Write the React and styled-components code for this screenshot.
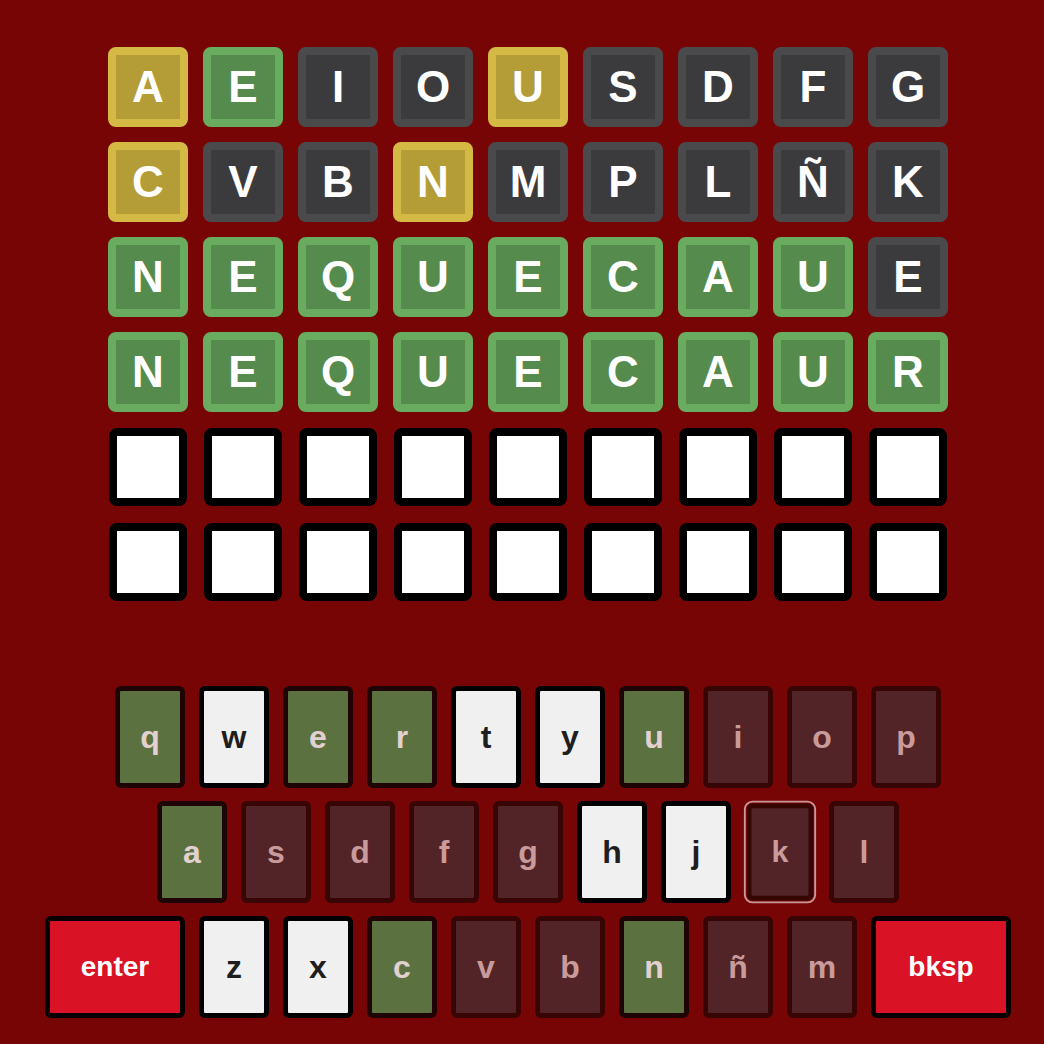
import React from "react";
import styled, { createGlobalStyle, css } from "styled-components";

const GlobalStyle = createGlobalStyle`
  html, body {
    margin: 0;
    padding: 0;
    background: #780505;
    overflow: hidden;
  }
  * {
    box-sizing: border-box;
  }
`;

const tileColors = {
  y: { border: "#d4ba45", fill: "#b49d37" },
  g: { border: "#69ab5f", fill: "#558b4c" },
  x: { border: "#4a4a4c", fill: "#3b3b3d" },
};

const keyColors = {
  g: { bg: "#5b7140", border: "#1e0404", color: "#e3d1d1" },
  w: { bg: "#f0f0f0", border: "#000000", color: "#1e1e1e" },
  d: { bg: "#522428", border: "#380505", color: "#c99b9b" },
  r: { bg: "#d91226", border: "#080000", color: "#ffffff" },
};

const Page = styled.div`
  min-height: 1044px;
  padding: 47px 0 0 12px;
  font-family: "Liberation Sans", Arial, sans-serif;
`;

const Board = styled.div`
  display: grid;
  grid-template-columns: repeat(9, 80px);
  grid-auto-rows: 80px;
  gap: 15px;
  justify-content: center;
`;

const Tile = styled.div`
  width: 80px;
  height: 80px;
  border-radius: 8px;
  border: 8px solid ${(p) => tileColors[p.state].border};
  background: ${(p) => tileColors[p.state].fill};
  color: #ffffff;
  font-size: 44px;
  font-weight: 700;
  display: flex;
  align-items: center;
  justify-content: center;
  line-height: 1;
`;

const EmptyTile = styled.div`
  width: 78px;
  height: 78px;
  margin: 1px;
  border-radius: 8px;
  border: 8px solid #000000;
  background: #ffffff;
`;

const Keyboard = styled.div`
  margin-top: 84px;
  display: flex;
  flex-direction: column;
  align-items: center;
  gap: 13px;
`;

const KeyRow = styled.div`
  display: flex;
  gap: 14px;
`;

const Key = styled.div`
  width: ${(p) => (p.wide ? "140px" : "70px")};
  height: 102px;
  border-radius: 6px;
  border: 5px solid ${(p) => keyColors[p.kind].border};
  background: ${(p) => keyColors[p.kind].bg};
  color: ${(p) => keyColors[p.kind].color};
  font-size: ${(p) => (p.wide ? "28px" : "32px")};
  font-weight: 700;
  display: flex;
  align-items: center;
  justify-content: center;
  ${(p) =>
    p.focused &&
    css`
      transform: scale(0.95);
      outline: 2px solid #c9979a;
      outline-offset: 1px;
    `}
`;

const rows = [
  "yA gE xI xO yU xS xD xF xG",
  "yC xV xB yN xM xP xL xÑ xK",
  "gN gE gQ gU gE gC gA gU xE",
  "gN gE gQ gU gE gC gA gU gR",
];

const keys = [
  "gq ww ge gr wt wy gu di do dp",
  "ga ds dd df dg wh wj dk dl",
  "r:enter wz wx gc dv db gn dñ dm r:bksp",
];

const parseKey = (s) => {
  if (s.startsWith("r:")) return { kind: "r", label: s.slice(2), wide: true };
  return { kind: s[0], label: s.slice(1), wide: false };
};

export default function App() {
  return (
    <>
      <GlobalStyle />
      <Page>
        <Board>
          {rows.map((row, ri) =>
            row.split(" ").map((t, ci) => (
              <Tile key={`${ri}-${ci}`} state={t[0]}>
                {t.slice(1)}
              </Tile>
            ))
          )}
          {Array.from({ length: 18 }).map((_, i) => (
            <EmptyTile key={`e-${i}`} />
          ))}
        </Board>
        <Keyboard>
          {keys.map((row, ri) => (
            <KeyRow key={ri}>
              {row.split(" ").map((s, ci) => {
                const k = parseKey(s);
                return (
                  <Key
                    key={ci}
                    kind={k.kind}
                    wide={k.wide}
                    focused={k.label === "k"}
                  >
                    {k.label}
                  </Key>
                );
              })}
            </KeyRow>
          ))}
        </Keyboard>
      </Page>
    </>
  );
}
